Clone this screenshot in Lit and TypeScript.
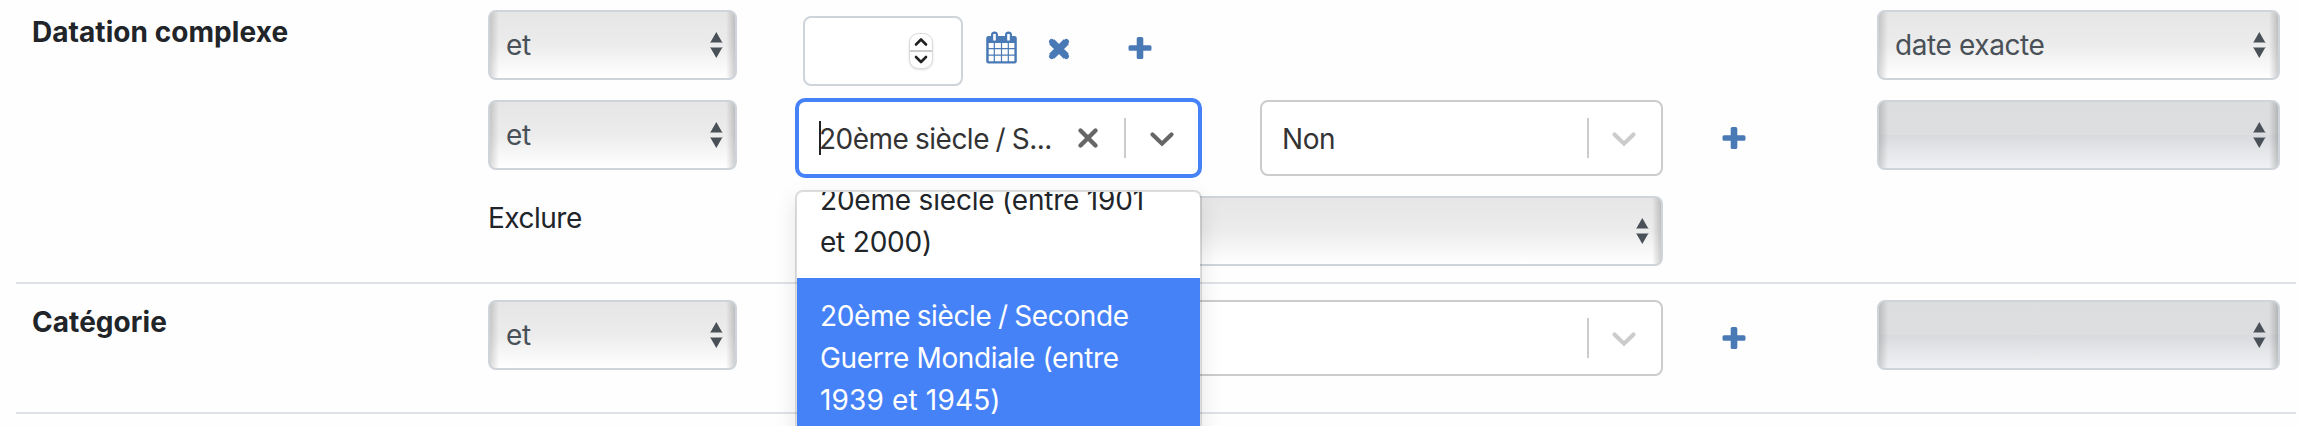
import { LitElement, html, css } from "lit";
import { customElement, property } from "lit/decorators.js";

const plus = html`<svg class="ico" width="24" height="24" viewBox="0 0 24 24"><path fill="#4a7ab5" d="M10.300 1h3.400a1.600 1.600 0 0 1 1.600 1.600V9.200h6.600a1.600 1.600 0 0 1 1.600 1.600v2.400a1.600 1.600 0 0 1-1.600 1.600h-6.600v6.600a1.600 1.600 0 0 1-1.600 1.600h-3.400a1.600 1.600 0 0 1-1.600-1.600v-6.600H2.100a1.600 1.600 0 0 1-1.600-1.600v-2.400a1.600 1.600 0 0 1 1.600-1.600h6.600V2.600A1.600 1.600 0 0 1 10.300 1z"/></svg>`;

@customElement("native-select")
class NativeSelect extends LitElement {
  @property() label = "";
  @property({ type: Boolean, reflect: true }) disabled = false;
  static styles = css`
    :host { display: block; }
    .box {
      box-sizing: border-box; height: 70px; border: 2px solid #ced4da; border-radius: 8px;
      display: flex; align-items: center; justify-content: space-between;
      padding: 0 12px 0 16px; color: #495057; line-height: 42px;
      background: linear-gradient(90deg, rgba(0,0,0,.15), rgba(0,0,0,0) 9px, rgba(0,0,0,0) calc(100% - 9px), rgba(0,0,0,.18)),
        linear-gradient(180deg, #e6e6e6 0%, #ececec 50%, #f2f2f2 65%, #ffffff 100%);
    }
    :host([disabled]) .box {
      background: linear-gradient(90deg, rgba(0,0,0,.15), rgba(0,0,0,0) 9px, rgba(0,0,0,0) calc(100% - 9px), rgba(0,0,0,.18)),
        linear-gradient(180deg, #dcddde 0%, #dddee0 50%, #d9dade 50%, #e5e6e8 75%, #f0f1f4 100%);
    }
    svg { display: block; }
  `;
  render() {
    return html`<div class="box"><span>${this.label}</span>
      <svg width="14" height="26" viewBox="0 0 14 26"><path fill="#495057" d="M7.300 0l6 10.400H1.300zM7.300 26l-6-10.400h12z"/><path fill="#9a9da1" d="M1 10.200h12.700v.9H1zM1 14.900h12.700v.9H1z"/></svg></div>`;
  }
}

@customElement("search-select")
class SearchSelect extends LitElement {
  @property() value = "";
  @property({ type: Boolean, reflect: true }) focused = false;
  static styles = css`
    :host { display: block; }
    .control {
      box-sizing: border-box; height: 76px; border: 2px solid #ccc; border-radius: 8px; background: #fff;
      display: flex; align-items: center; color: #333; line-height: 42px;
    }
    :host([focused]) .control { border-color: #4682f7; box-shadow: 0 0 0 2px #4682f7; }
    .value { flex: 1; display: flex; align-items: center; padding-left: 20px; white-space: nowrap; }
    .value span { padding-top: 2px; }
    :host([focused]) span { letter-spacing: -.5px; word-spacing: -.8px; }
    .caret { width: 2px; height: 34px; background: #222; margin-right: -2px; }
    .sep { width: 2px; height: 40px; background: #ccc; }
    .clear { margin-right: 25px; display: block; }
    .chev { display: block; margin: 1px 24px 0 22px; color: #ccc; }
    :host([focused]) .chev { color: #666; margin: 1px 23px 0; }
  `;
  render() {
    return html`<div class="control">
      <div class="value">${this.focused ? html`<i class="caret"></i>` : ""}<span>${this.value}</span></div>
      ${this.focused ? html`<svg class="clear" width="22" height="22" viewBox="0 0 22 22"><path d="M3.500 3.500l15 15M18.500 3.500l-15 15" stroke="#666" stroke-width="4.400" stroke-linecap="round"/></svg>` : ""}
      <div class="sep"></div>
      <svg class="chev" width="26" height="16" viewBox="0 0 26 16"><path d="M3.500 3.500l9.500 9.200 9.500-9.200" fill="none" stroke="currentColor" stroke-width="4.200" stroke-linecap="round" stroke-linejoin="miter"/></svg>
    </div>`;
  }
}

@customElement("app-root")
class AppRoot extends LitElement {
  static styles = css`
    :host {
      display: block; height: 426px; overflow: hidden; background: #fefefe; color: #212529;
      font: 28px/42px Inter, "Liberation Sans", sans-serif; letter-spacing: -.4px;
    }
    .group {
      box-sizing: border-box; margin: 0 4px 0 16px; padding: 10px 16px 0 16px; border-bottom: 2px solid #dee2e6;
      display: grid; grid-template-columns: 456px 249px 60px 866px 214px 403px; align-items: start;
    }
    .first { height: 284px; grid-template-rows: 90px 96px 70px; }
    .second { height: 130px; padding-top: 16px; }
    .label { font-weight: 700; padding-top: 1px; letter-spacing: .06px; }
    .c1 { grid-column: 1; } .c2 { grid-column: 2; } .c4 { grid-column: 4; } .c6 { grid-column: 6; }
    .dates { display: flex; align-items: flex-start; padding: 6px 0 0 6px; }
    .number {
      box-sizing: border-box; width: 160px; height: 70px; border: 2px solid #ced4da; border-radius: 8px; background: #fff;
      display: flex; align-items: flex-start; justify-content: flex-end; padding: 13px 26px 0 0;
    }
    svg { display: block; }
    .spin { filter: drop-shadow(0 1px 1px rgba(0,0,0,.12)); }
    .cal { margin: 15px 0 0 23px; }
    .times { margin: 22px 0 0 31px; }
    .add { margin: 20px 0 0 58px; }
    .pair { display: grid; grid-template-columns: 403px 403px; column-gap: 60px; flex: none; }
    .wide { width: 866px; flex: none; }
    .line { display: flex; }
    .plus { margin: 26px 0 0 59px; flex: none; }
    .exclude { padding-top: 1px; letter-spacing: -.5px; }
    .anchor { position: relative; }
    .menu {
      position: absolute; z-index: 2; left: -2px; top: 90px; width: 407px; height: 400px; box-sizing: border-box;
      border: 2px solid rgba(0,0,0,.13); border-radius: 8px; background: #fff; background-clip: padding-box;
      box-shadow: 0 8px 22px rgba(0,0,0,.1); overflow: hidden;
    }
    .opt { padding: 17px 24px 15px 23px; letter-spacing: -.36px; }
    .opt.top { margin-top: -30px; letter-spacing: -.2px; }
    .opt.on { background: #4682f7; color: #fff; }
    .tight { word-spacing: -1px; }
    .years { letter-spacing: .15px; }
  `;
  render() {
    return html`
      <section class="group first">
        <div class="c1 label">Datation complexe</div>
        <native-select class="c2" label="et"></native-select>
        <div class="c4 dates">
          <div class="number">
            <svg class="spin" width="28" height="40" viewBox="0 0 28 40"><rect x="2.500" y="2.500" width="23" height="35" rx="9" fill="#fff" stroke="#dadada"/><path d="M3 20h22" stroke="#ccc" stroke-width="2"/><path d="M9 13.500l5-5 5 5M9 26l5 5 5-5" fill="none" stroke="#222" stroke-width="2.600" stroke-linecap="round" stroke-linejoin="round"/></svg>
          </div>
          <svg class="cal" width="31" height="34" viewBox="0 0 31 34"><path fill="#4a7ab5" fill-rule="evenodd" d="M2.500 5H5V3a3 3 0 0 1 3-2.500h1A3 3 0 0 1 12 3v2h7V3a3 3 0 0 1 3-2.500h1A3 3 0 0 1 26 3v2h2.500A2.300 2.300 0 0 1 30.800 7.300v23a2.300 2.300 0 0 1-2.300 2.300h-26A2.300 2.300 0 0 1 .2 30.300v-23A2.300 2.300 0 0 1 2.500 5zM7.200 3v6.500h2.600V3zM21.200 3v6.500h2.600V3zM2.700 12v5h5v-5zM8.900 12v5h6v-5zM16.100 12v5h5.600v-5zM22.900 12v5h5.500v-5zM2.700 18.200v5.300h5v-5.300zM8.900 18.200v5.300h6v-5.300zM16.100 18.200v5.300h5.600v-5.300zM22.900 18.200v5.300h5.500v-5.300zM2.700 24.700v5.500h5v-5.500zM8.900 24.700v5.500h6v-5.500zM16.100 24.700v5.500h5.600v-5.500zM22.900 24.700v5.500h5.500v-5.500z"/></svg>
          <svg class="times" width="22" height="22" viewBox="0 0 22 22"><path d="M3.700 3.700l14.600 14.600M18.300 3.700L3.700 18.300" stroke="#4a7ab5" stroke-width="7.200"/><path d="M3.700 3.700l14.600 14.600M18.300 3.700L3.700 18.300" stroke="#4a7ab5" stroke-width="5.400" stroke-linecap="round"/></svg>
          <div class="add">${plus}</div>
        </div>
        <native-select class="c6" label="date exacte"></native-select>

        <native-select class="c2" label="et"></native-select>
        <div class="c4 line">
          <div class="pair">
            <div class="anchor">
              <search-select focused value="20ème siècle / S..."></search-select>
              <div class="menu">
                <div class="opt top">20ème siècle (entre 1901 et 2000)</div>
                <div class="opt on"><span class="tight">20ème siècle / Seconde</span> Guerre Mondiale (entre <span class="years">1939 et 1945)</span></div>
              </div>
            </div>
            <search-select value="Non"></search-select>
          </div>
          <div class="plus">${plus}</div>
        </div>
        <native-select class="c6" disabled></native-select>

        <div class="c2 exclude">Exclure</div>
        <native-select class="c4 wide"></native-select>
      </section>
      <section class="group second">
        <div class="c1 label">Catégorie</div>
        <native-select class="c2" label="et"></native-select>
        <div class="c4 line">
          <search-select class="wide"></search-select>
          <div class="plus">${plus}</div>
        </div>
        <native-select class="c6" disabled></native-select>
      </section>`;
  }
}
